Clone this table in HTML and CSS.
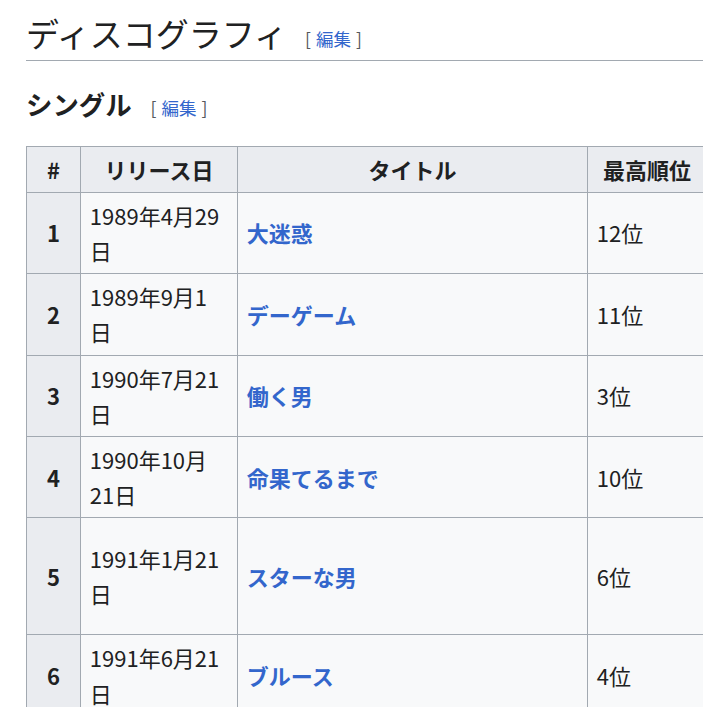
FILE: index.html
```html
<!DOCTYPE html>
<html lang="ja">
<head>
<meta charset="utf-8">
<title>ディスコグラフィ</title>
<link rel="stylesheet" href="styles.css">
</head>
<body>
<main class="content">
  <h2 class="h2">ディスコグラフィ<span class="editsection"><span class="bracket">[</span><a href="#">編集</a><span class="bracket">]</span></span></h2>
  <h3 class="h3">シングル<span class="editsection"><span class="bracket">[</span><a href="#">編集</a><span class="bracket">]</span></span></h3>
  <table class="wikitable">
    <colgroup>
      <col class="c-num">
      <col class="c-date">
      <col class="c-title">
      <col class="c-rank">
    </colgroup>
    <thead>
      <tr><th>#</th><th>リリース日</th><th>タイトル</th><th>最高順位</th></tr>
    </thead>
    <tbody>
      <tr><th>1</th><td>1989年4月29日</td><td><a href="#">大迷惑</a></td><td>12位</td></tr>
      <tr><th>2</th><td>1989年9月1日</td><td><a href="#">デーゲーム</a></td><td>11位</td></tr>
      <tr><th>3</th><td>1990年7月21日</td><td><a href="#">働く男</a></td><td>3位</td></tr>
      <tr><th>4</th><td>1990年10月21日</td><td><a href="#">命果てるまで</a></td><td>10位</td></tr>
      <tr class="tall"><th>5</th><td>1991年1月21日</td><td><a href="#">スターな男</a></td><td>6位</td></tr>
      <tr><th>6</th><td>1991年6月21日</td><td><a href="#">ブルース</a></td><td>4位</td></tr>
    </tbody>
  </table>
</main>
</body>
</html>
```
FILE: styles.css
```css
html, body {
  margin: 0;
  padding: 0;
  overflow: hidden;
  background: #ffffff;
}
body {
  font-family: "Noto Sans CJK JP", "Noto Sans", sans-serif;
  color: #202122;
  font-size: 22px;
  line-height: 1.6;
}
.content {
  padding-left: 26px;
}
.h2 {
  margin: 12px 0 0 0;
  font-size: 33px;
  font-weight: 400;
  line-height: 43px;
  padding-bottom: 5px;
  border-bottom: 1px solid #a2a9b1;
  white-space: nowrap;
}
.h3 {
  margin: 22px 0 0 0;
  font-size: 26.4px;
  font-weight: 700;
  line-height: 42px;
  white-space: nowrap;
}
.editsection {
  font-size: 17.5px;
  font-weight: 400;
  line-height: 1;
  margin-left: 18px;
  vertical-align: 1px;
}
.h3 .editsection {
  margin-left: 19px;
  vertical-align: 0;
}
.editsection a {
  color: #3366cc;
  text-decoration: none;
  margin: 0 5px;
}
.bracket {
  color: #54595d;
}
.wikitable {
  margin-top: 21px;
  border-collapse: collapse;
  table-layout: fixed;
  width: 680px;
  background: #f8f9fa;
  border: 1px solid #a2a9b1;
}
.c-num { width: 54px; }
.c-date { width: 157px; }
.c-title { width: 350px; }
.c-rank { width: 119px; }
.wikitable th,
.wikitable td {
  border: 1px solid #a2a9b1;
  padding: 5px 8.8px;
  line-height: 35.2px;
}
.wikitable thead th {
  padding: 4.8px 8.8px;
}
.wikitable th {
  background: #eaecf0;
  font-weight: 700;
  text-align: center;
}
.wikitable td {
  text-align: left;
}
.wikitable td a {
  color: #3366cc;
  font-weight: 700;
  text-decoration: none;
}
.wikitable tr.tall {
  height: 117px;
}
```
